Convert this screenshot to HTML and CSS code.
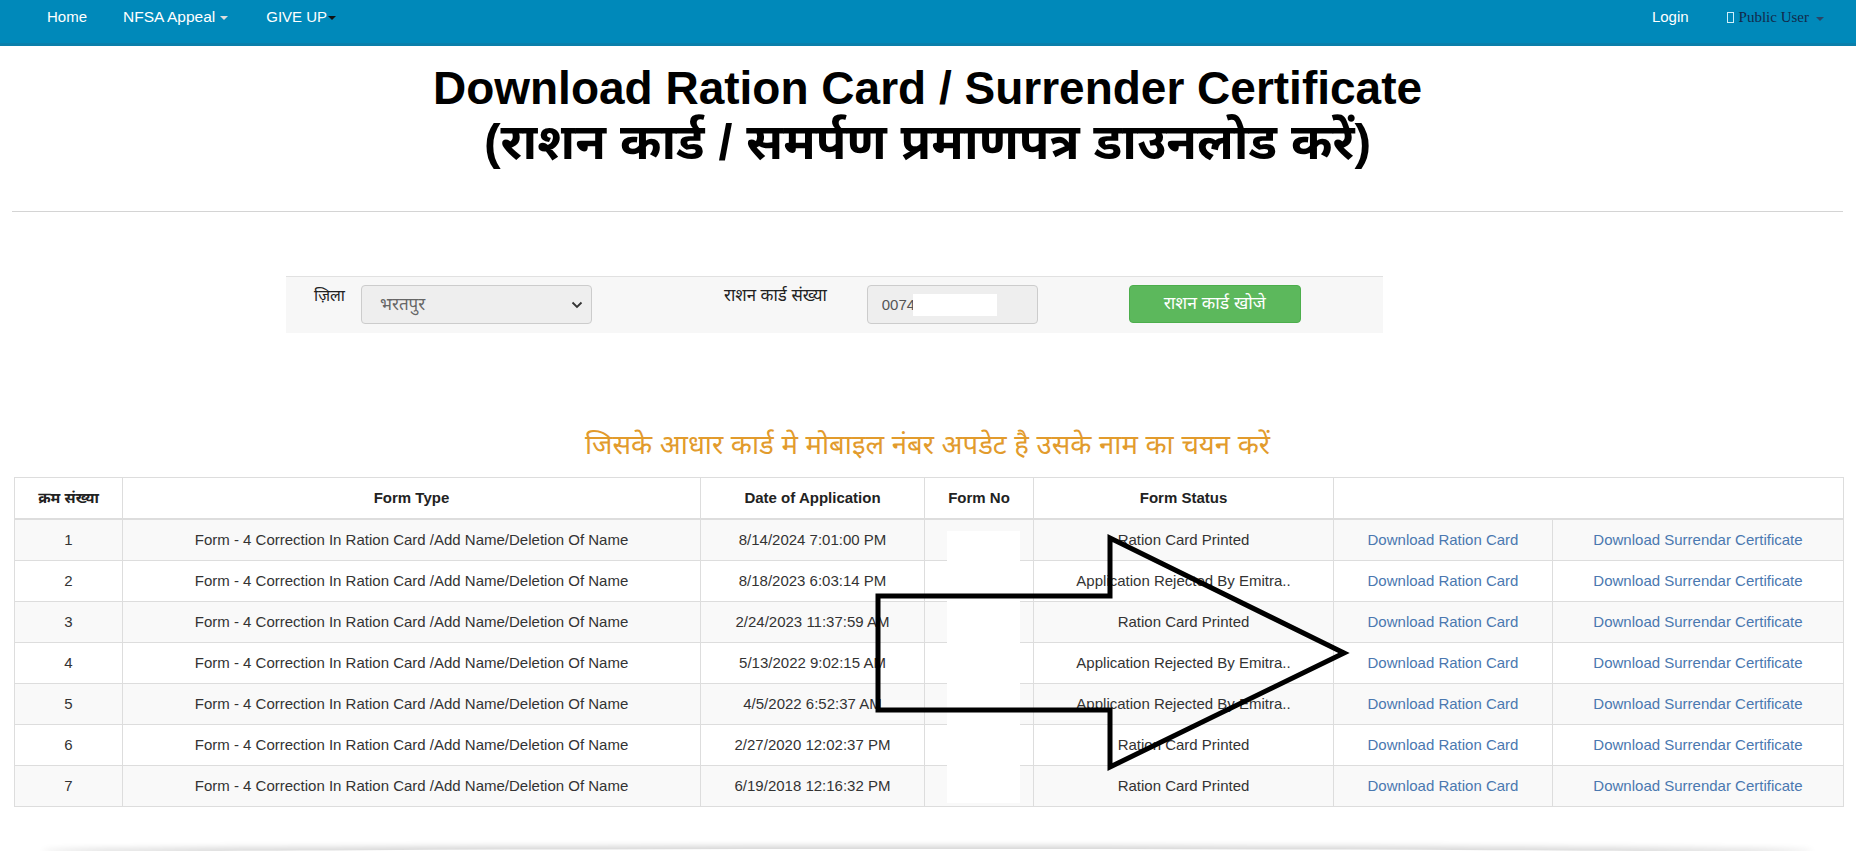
FILE: index.html
```html
<!DOCTYPE html>
<html lang="hi">
<head>
<meta charset="utf-8">
<title>Download Ration Card</title>
<link rel="stylesheet" href="styles.css">
</head>
<body>
<nav class="navbar">
  <ul class="nav-left">
    <li><a href="#">Home</a></li>
    <li><a href="#">NFSA Appeal<span class="caret caret-light"></span></a></li>
    <li><a href="#">GIVE UP<span class="caret caret-dark tight"></span></a></li>
  </ul>
  <ul class="nav-right">
    <li><a href="#">Login</a></li>
    <li><a href="#" class="user"><span class="tofu"></span>Public User<span class="caret caret-user"></span></a></li>
  </ul>
</nav>

<main class="page">
  <h1 class="title">Download Ration Card / Surrender Certificate<br><span class="title-hi">(राशन कार्ड / समर्पण प्रमाणपत्र डाउनलोड करें)</span></h1>
  <hr class="rule">

  <section class="search-panel">
    <label class="lbl lbl-district">ज़िला</label>
    <div class="select-box"><span>भरतपुर</span>
      <svg width="12" height="8" viewBox="0 0 12 8"><path d="M1.5 1.5 L6 6 L10.5 1.5" fill="none" stroke="#333" stroke-width="1.8"/></svg>
    </div>
    <label class="lbl lbl-card">राशन कार्ड संख्या</label>
    <div class="input-wrap"><input class="card-input" type="text" value="0074"><span class="redact-input"></span></div>
    <button class="btn-search" type="button">राशन कार्ड खोजे</button>
  </section>

  <p class="notice">जिसके आधार कार्ड मे मोबाइल नंबर अपडेट है उसके नाम का चयन करें</p>

  <div class="table-wrap">
    <table class="grid">
      <colgroup>
        <col class="c1"><col class="c2"><col class="c3"><col class="c4"><col class="c5"><col class="c6"><col class="c7">
      </colgroup>
      <thead>
        <tr><th>क्रम संख्या</th><th>Form Type</th><th>Date of Application</th><th>Form No</th><th>Form Status</th><th colspan="2"></th></tr>
      </thead>
      <tbody>
        <tr><td>1</td><td>Form - 4 Correction In Ration Card /Add Name/Deletion Of Name</td><td>8/14/2024 7:01:00 PM</td><td></td><td>Ration Card Printed</td><td><a href="#">Download Ration Card</a></td><td><a href="#">Download Surrendar Certificate</a></td></tr>
        <tr><td>2</td><td>Form - 4 Correction In Ration Card /Add Name/Deletion Of Name</td><td>8/18/2023 6:03:14 PM</td><td></td><td>Application Rejected By Emitra..</td><td><a href="#">Download Ration Card</a></td><td><a href="#">Download Surrendar Certificate</a></td></tr>
        <tr><td>3</td><td>Form - 4 Correction In Ration Card /Add Name/Deletion Of Name</td><td>2/24/2023 11:37:59 AM</td><td></td><td>Ration Card Printed</td><td><a href="#">Download Ration Card</a></td><td><a href="#">Download Surrendar Certificate</a></td></tr>
        <tr><td>4</td><td>Form - 4 Correction In Ration Card /Add Name/Deletion Of Name</td><td>5/13/2022 9:02:15 AM</td><td></td><td>Application Rejected By Emitra..</td><td><a href="#">Download Ration Card</a></td><td><a href="#">Download Surrendar Certificate</a></td></tr>
        <tr><td>5</td><td>Form - 4 Correction In Ration Card /Add Name/Deletion Of Name</td><td>4/5/2022 6:52:37 AM</td><td></td><td>Application Rejected By Emitra..</td><td><a href="#">Download Ration Card</a></td><td><a href="#">Download Surrendar Certificate</a></td></tr>
        <tr><td>6</td><td>Form - 4 Correction In Ration Card /Add Name/Deletion Of Name</td><td>2/27/2020 12:02:37 PM</td><td></td><td>Ration Card Printed</td><td><a href="#">Download Ration Card</a></td><td><a href="#">Download Surrendar Certificate</a></td></tr>
        <tr><td>7</td><td>Form - 4 Correction In Ration Card /Add Name/Deletion Of Name</td><td>6/19/2018 12:16:32 PM</td><td></td><td>Ration Card Printed</td><td><a href="#">Download Ration Card</a></td><td><a href="#">Download Surrendar Certificate</a></td></tr>
      </tbody>
    </table>
    <span class="redact-formno"></span>
  </div>

  <div class="footer-shadow"></div>
</main>

<svg class="arrow" width="1856" height="851" viewBox="0 0 1856 851">
  <polygon points="878,596 1110,596 1110,538 1344,653 1110,767 1110,710 878,710" fill="none" stroke="#000" stroke-width="5" stroke-linejoin="miter"/>
</svg>
</body>
</html>
```
FILE: styles.css
```css
* { box-sizing: border-box; }
html, body { margin: 0; padding: 0; }
body {
  position: relative;
  width: 1856px;
  height: 851px;
  overflow: hidden;
  background: #fff;
  color: #333;
  font-family: "Liberation Sans", Arial, "Noto Sans Devanagari", "Lohit Devanagari", "FreeSans", sans-serif;
  font-size: 15px;
  line-height: 20px;
}

/* navbar */
.navbar {
  display: flex;
  justify-content: space-between;
  height: 46px;
  background: #0089ba;
  border-bottom: 3px solid #0a7fab;
}
.navbar ul { list-style: none; margin: 0; padding: 0; display: flex; }
.nav-left { padding-left: 47px !important; gap: 36px; }
.nav-left li:nth-child(2) a { font-size: 15.5px; }
.nav-left li:nth-child(3) { margin-left: 2px; }
.nav-right { padding-right: 32px !important; gap: 38px; }
.navbar a {
  display: block;
  color: #fff;
  text-decoration: none;
  font-size: 15px;
  line-height: 20px;
  padding-top: 7px;
}
.caret {
  display: inline-block;
  width: 0; height: 0;
  margin-left: 5px;
  vertical-align: middle;
  border-top: 4px solid #ddd;
  border-left: 4px solid transparent;
  border-right: 4px solid transparent;
}
.caret-dark { border-top-color: #111; }
.caret.tight { margin-left: 1px; }
.user {
  font-family: "Liberation Serif", "Times New Roman", serif;
  color: #13294a !important;
}
.tofu {
  display: inline-block;
  width: 7px; height: 11px;
  border: 1px solid #cfeffa;
  margin-right: 5px;
  vertical-align: -1px;
}
.caret-user { border-top-color: #2a4566; margin-left: 7px; }

/* title */
.page { padding: 0 13px 0 12px; }
.title {
  margin: 15px 0 0;
  text-align: center;
  font-size: 46px;
  line-height: 54px;
  font-weight: bold;
  color: #000;
}
.title-hi { font-size: 50px; }
.rule {
  margin: 41px 0 0;
  border: 0;
  border-top: 1px solid #d4d4d4;
  height: 0;
}

/* search panel */
.search-panel {
  margin: 64px 0 0 274px;
  width: 1097px;
  height: 57px;
  background: #f7f7f7;
  border-top: 1px solid #e1e1e1;
  display: flex;
  align-items: flex-start;
  padding-top: 8px;
}
.lbl {
  font-size: 16px;
  line-height: 22px;
  color: #222;
}
.lbl-district { margin-left: 28px; }
.select-box {
  margin-left: 16px;
  width: 231px;
  height: 39px;
  background: #eee;
  border: 1px solid #ccc;
  border-radius: 4px;
  display: flex;
  align-items: center;
  justify-content: space-between;
  padding: 0 8px 0 18px;
  font-size: 17px;
  color: #666;
}
.lbl-card { margin-left: 132px; font-size: 16.8px; }
.input-wrap {
  position: relative;
  margin-left: 40px;
}
.card-input {
  display: block;
  width: 171px;
  height: 39px;
  background: #eee;
  border: 1px solid #ccc;
  border-radius: 4px;
  padding: 0 14px;
  font-family: "Liberation Sans", Arial, sans-serif;
  font-size: 15px;
  color: #555;
}
.redact-input {
  position: absolute;
  left: 46px;
  top: 9px;
  width: 84px;
  height: 22px;
  background: #fff;
}
.btn-search {
  margin-left: 91px;
  width: 172px;
  height: 38px;
  background: #5cb85c;
  border: 1px solid #4cae4c;
  border-radius: 4px;
  color: #fff;
  font-family: inherit;
  font-size: 17.5px;
}

/* notice */
.notice {
  margin: 94px 0 0;
  text-align: center;
  font-size: 27.5px;
  line-height: 36px;
  color: #e29b2c;
}

/* table */
.table-wrap { position: relative; margin: 14px 0 0 2px; }
.grid {
  width: 1829px;
  border-collapse: collapse;
  table-layout: fixed;
  border: 1px solid #ddd;
}
.c1 { width: 108px; } .c2 { width: 578px; } .c3 { width: 224px; } .c4 { width: 109px; }
.c5 { width: 300px; } .c6 { width: 219px; } .c7 { width: 291px; }
.grid th, .grid td {
  border: 1px solid #ddd;
  padding: 10px 6px;
  text-align: center;
  line-height: 20px;
  white-space: nowrap;
}
.grid th { font-weight: bold; color: #222; border-bottom: 2px solid #ddd; height: 41px; }
.grid td { height: 41px; }
.grid tbody tr:nth-child(odd) { background: #f9f9f9; }
.grid a { color: #4a78b0; text-decoration: none; }
.redact-formno {
  position: absolute;
  left: 933px;
  top: 54px;
  width: 73px;
  height: 272px;
  background: #fff;
}

.footer-shadow {
  margin: 42px 30px 0;
  height: 10px;
  box-shadow: 0 -3px 6px rgba(0,0,0,0.18);
  border-radius: 50%;
}

.arrow {
  position: absolute;
  left: 0;
  top: 0;
  pointer-events: none;
}
```
